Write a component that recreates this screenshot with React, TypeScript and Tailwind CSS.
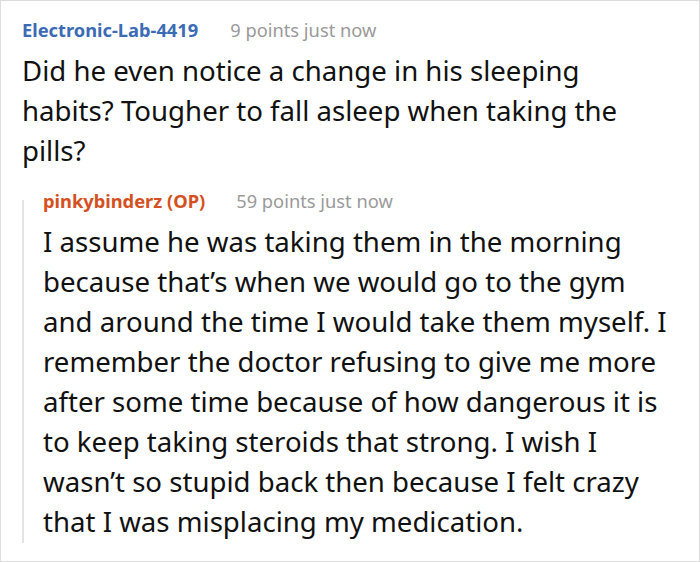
import React from 'react';

const font = { fontFamily: '"Noto Sans", "Open Sans", sans-serif' };

export default function App() {
    return (
        <div
            className="w-[700px] h-[562px] bg-white border border-[#dcdcdc] pl-[21px] pt-[17px] text-[#111] overflow-hidden"
            style={font}
        >
            <div className="flex items-baseline h-[24px] leading-[24px] text-[18.3px]">
                <span className="font-bold text-[#3c6bb5]">Electronic-Lab-4419</span>
                <span className="ml-[32px] text-[#9a9a9a]">9 points just now</span>
            </div>
            <p className="mt-[8px] text-[27.6px] leading-[40px]">
                Did he even notice a change in his sleeping<br />
                habits? Tougher to fall asleep when taking the<br />
                pills?
            </p>
            <div className="flex mt-[30px]">
                <div className="w-[2px] bg-[#e4e4e4] shrink-0" />
                <div className="pl-[19px] -mt-[11px] pb-[2px]">
                    <div className="flex items-baseline h-[24px] leading-[24px] text-[18.3px]">
                        <span className="font-bold text-[#d4501e]">pinkybinderz (OP)</span>
                        <span className="ml-[31px] text-[#9a9a9a]">59 points just now</span>
                    </div>
                    <p className="mt-[8px] text-[27.6px] leading-[40px]">
                        I assume he was taking them in the morning<br />
                        because that’s when we would go to the gym<br />
                        and around the time I would take them myself. I<br />
                        remember the doctor refusing to give me more<br />
                        after some time because of how dangerous it is<br />
                        to keep taking steroids that strong. I wish I<br />
                        wasn’t so stupid back then because I felt crazy<br />
                        that I was misplacing my medication.
                    </p>
                </div>
            </div>
        </div>
    );
}
